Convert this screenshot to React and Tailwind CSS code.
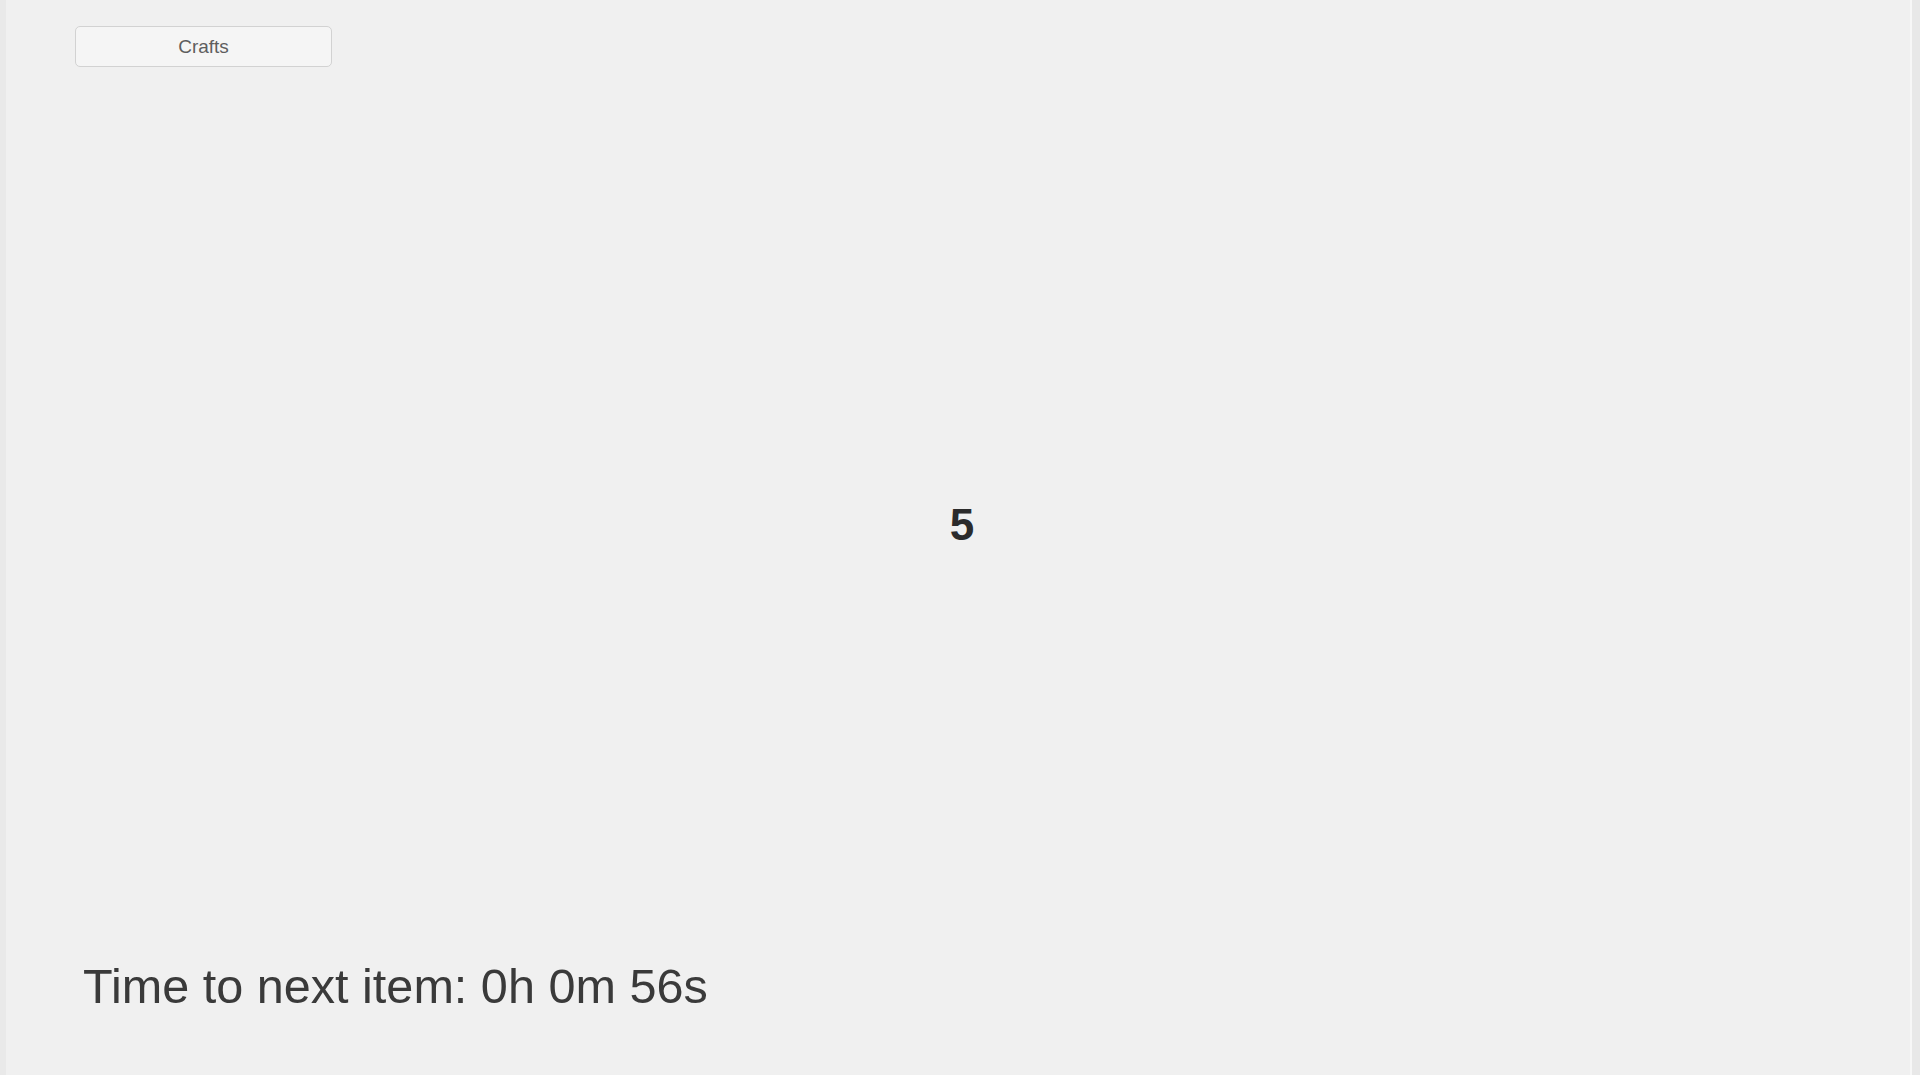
export default function App() {
    return (
        <div className="flex h-screen w-full bg-[#f0f0f0] font-['Liberation_Sans',Arial,sans-serif]">
            {/* left frame edge */}
            <div className="w-[6px] bg-[#e9e9e9]" />

            <div className="flex flex-1 flex-col">
                {/* top toolbar */}
                <div className="pt-[26px] pl-[69px]">
                    <button className="flex h-[41px] w-[257px] items-center justify-center rounded-[5px] border border-[#d2d2d2] bg-[#f5f5f5] pt-[2px] text-[19px] text-[#5e5e5e]">
                        Crafts
                    </button>
                </div>

                {/* counter */}
                <div className="flex flex-1 items-center justify-center pt-[20px] pl-[8px]">
                    <span className="text-[44px] font-bold leading-none text-[#2b2b2b]">5</span>
                </div>

                {/* timer */}
                <div className="pb-[64px] pl-[77px]">
                    <p className="text-[48.6px] leading-none text-[#3a3a3a]">Time to next item: 0h 0m 56s</p>
                </div>
            </div>

            {/* right frame edge */}
            <div className="flex">
                <div className="w-[2px] bg-[#f7f7f7]" />
                <div className="w-[8px] bg-[#e8e8e8]" />
            </div>
        </div>
    )
}
